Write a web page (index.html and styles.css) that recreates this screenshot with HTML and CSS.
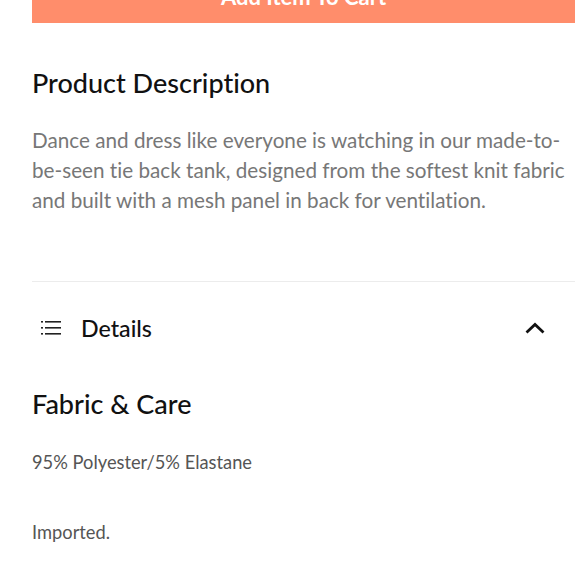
FILE: index.html
```html
<!DOCTYPE html>
<html>
<head>
<meta charset="utf-8">
<link rel="stylesheet" href="styles.css">
</head>
<body>
<div class="page">
  <button class="cart-btn">Add Item To Cart</button>
  <section class="desc">
    <h2 class="heading">Product Description</h2>
    <p class="desc-text">Dance and dress like everyone is watching in our made-to-be-seen tie back tank, designed from the softest knit fabric and built with a mesh panel in back for ventilation.</p>
  </section>
  <div class="divider"></div>
  <div class="acc-row">
    <svg class="list-icon" width="20" height="14" viewBox="0 0 20 14">
      <g fill="#222">
        <rect x="0" y="0" width="2" height="1.6"/>
        <rect x="4" y="0" width="16" height="1.6"/>
        <rect x="0" y="6" width="2" height="1.6"/>
        <rect x="4" y="6" width="16" height="1.6"/>
        <rect x="0" y="12" width="2" height="1.6"/>
        <rect x="4" y="12" width="16" height="1.6"/>
      </g>
    </svg>
    <span class="acc-title">Details</span>
    <svg class="chev" width="20" height="12" viewBox="0 0 20 12">
      <path d="M1.5 10.5 L10 2.5 L18.5 10.5" fill="none" stroke="#111" stroke-width="2.8"/>
    </svg>
  </div>
  <section class="fabric">
    <h2 class="heading">Fabric &amp; Care</h2>
    <p class="line">95% Polyester/5% Elastane</p>
    <p class="line imp">Imported.</p>
  </section>
</div>
</body>
</html>
```

FILE: styles.css
```css
html, body {
  margin: 0;
  padding: 0;
  background: #fff;
}
body {
  font-family: Lato, "Open Sans", sans-serif;
  font-variant-ligatures: none;
  color: #111;
}
.page {
  padding-left: 32px;
  padding-right: 5px;
  margin-top: -30px;
}
.cart-btn {
  display: block;
  width: 100%;
  height: 53px;
  border: none;
  background: #ff8d6b;
  color: #fff;
  font-family: inherit;
  font-size: 22px;
  font-weight: 700;
  padding: 0;
}
.desc {
  padding-top: 42px;
}
.heading {
  margin: 0;
  font-size: 27px;
  font-weight: 500;
  line-height: 36px;
  color: #111;
}
.desc-text {
  margin: 24px 0 0 0;
  font-size: 20.7px;
  line-height: 30px;
  color: #777;
  padding-right: 0;
}
.divider {
  height: 1px;
  background: #ececec;
  margin-top: 66px;
}
.acc-row {
  display: flex;
  align-items: center;
  height: 92px;
  padding-left: 9px;
}
.list-icon {
  flex: none;
}
.acc-title {
  margin-left: 20px;
  font-size: 23.2px;
  font-weight: 500;
  color: #111;
  flex: 1;
}
.chev {
  margin-right: 30px;
}
.fabric {
  padding-top: 12px;
}
.line {
  margin: 27px 0 0 0;
  font-size: 18.3px;
  line-height: 26px;
  color: #555;
}
.line.imp {
  margin-top: 44px;
}
```
